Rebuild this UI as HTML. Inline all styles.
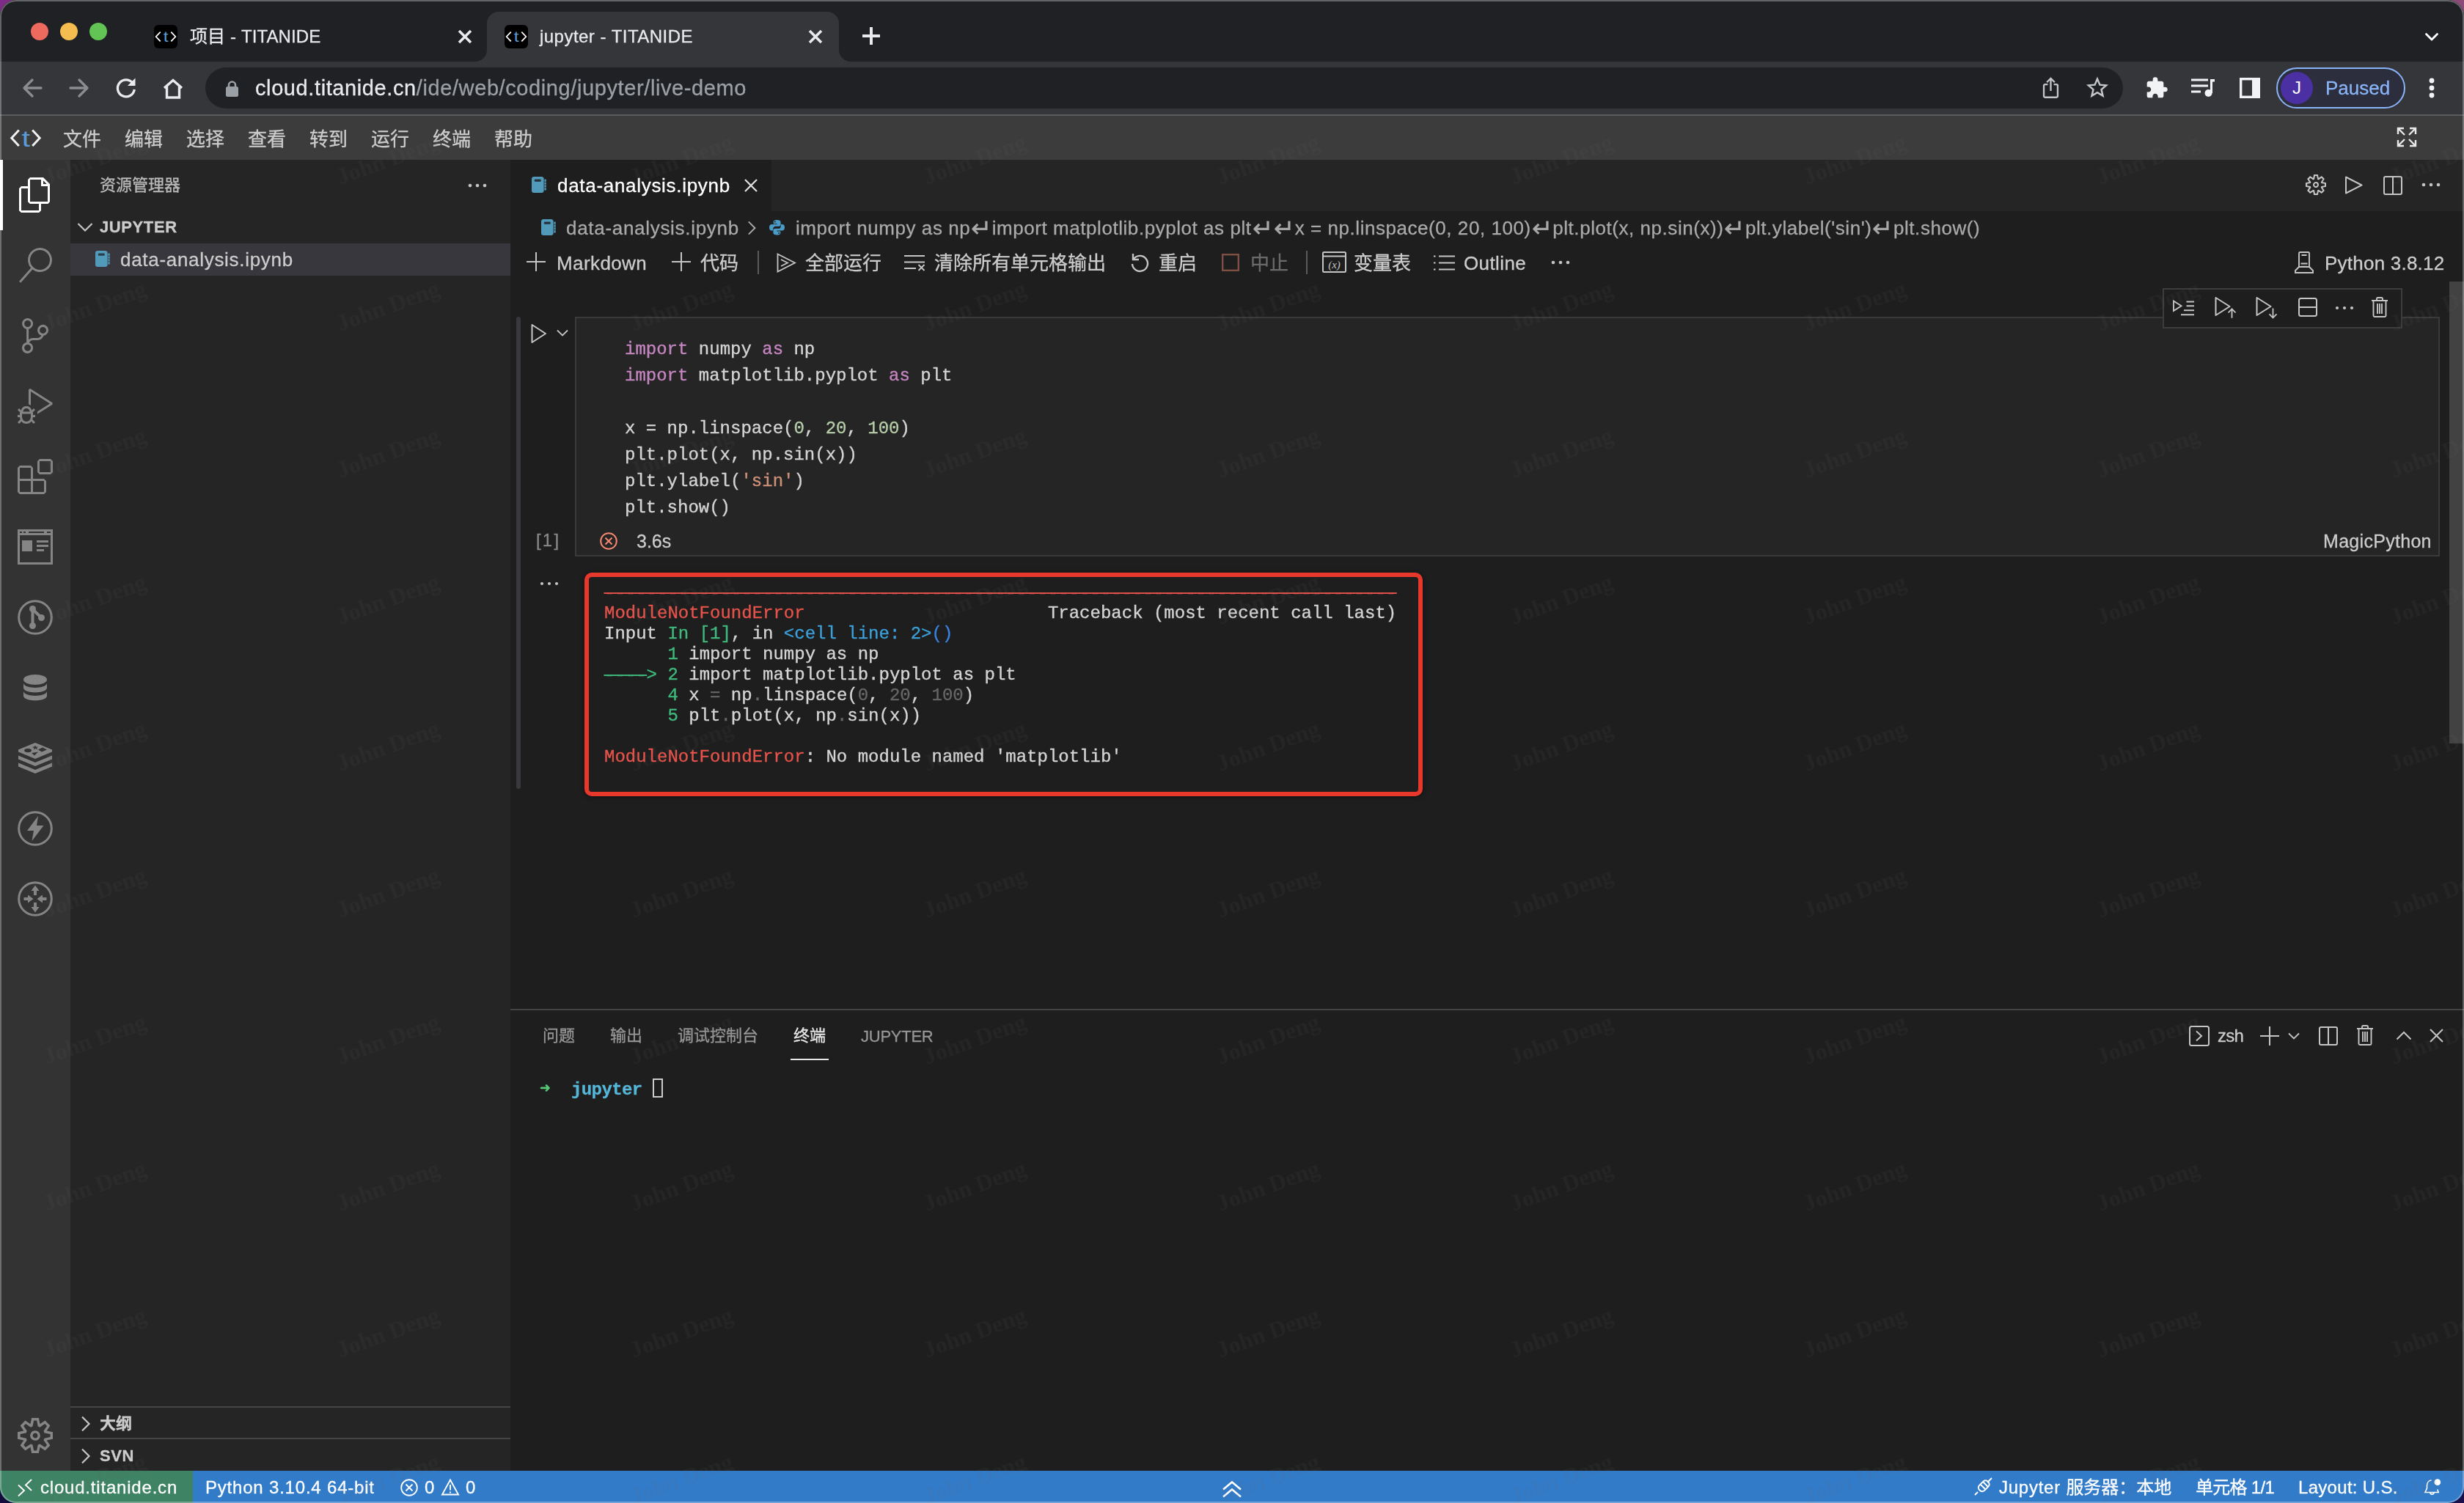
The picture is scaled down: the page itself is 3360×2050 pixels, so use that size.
<!DOCTYPE html>
<html lang="zh-CN"><head><meta charset="utf-8"><title>jupyter - TITANIDE</title>
<style>
html,body{margin:0;padding:0;background:#000}
body{width:3360px;height:2050px;overflow:hidden;position:relative;font-family:"Liberation Sans","Noto Sans CJK SC",sans-serif;color:#ccc;-webkit-font-smoothing:antialiased}
.a{position:absolute}
.t,pre,.wm{will-change:transform}
pre{-webkit-text-stroke:.35px currentColor}
.t{position:absolute;white-space:nowrap;line-height:40px;height:40px;font-size:26px;color:#ccc;-webkit-text-stroke:.3px currentColor}
svg{position:absolute;overflow:visible}
.mono{font-family:"Liberation Mono","DejaVu Sans Mono","Noto Sans Mono CJK SC",monospace}
#win{left:0;top:0;width:3360px;height:2050px;border-radius:22px;overflow:hidden;background:#1e1e1e}
#frame{left:0;top:0;width:3360px;height:2050px;border-radius:22px;box-shadow:inset 0 0 0 2px rgba(255,255,255,.3);z-index:50;pointer-events:none}
/* chrome */
#tabstrip{left:0;top:0;width:3360px;height:84px;background:#202124}
#toolbar{left:0;top:84px;width:3360px;height:72px;background:#35363a;border-bottom:2px solid #5a5b5f}
#menubar{left:0;top:158px;width:3360px;height:60px;background:#3c3c3c}
.tl{width:24px;height:24px;border-radius:50%;top:31px}
#atab{left:664px;top:16px;width:480px;height:68px;background:#35363a;border-radius:16px 16px 0 0}
#atab:before,#atab:after{content:"";position:absolute;bottom:0;width:16px;height:16px}
#atab:before{left:-16px;background:radial-gradient(circle at 0 0,rgba(53,54,58,0) 15.5px,#35363a 16.5px)}
#atab:after{right:-16px;background:radial-gradient(circle at 100% 0,rgba(53,54,58,0) 15.5px,#35363a 16.5px)}
.fav{width:32px;height:32px;border-radius:7px;background:#000;top:34px;color:#fff;font-size:18px;line-height:31px;text-align:center;letter-spacing:-1.5px;font-family:"Liberation Mono",monospace}
.fav b{font-weight:400;color:#5b9ddb}
.tabt{font-size:24px;color:#e8eaed;top:30px}
#omni{left:280px;top:92px;width:2615px;height:56px;border-radius:28px;background:#202124}
.menu{top:169.5px;font-size:26px;color:#ccc}
/* workbench */
#actbar{left:0;top:218px;width:96px;height:1788px;background:#333}
#sidebar{left:96px;top:218px;width:600px;height:1788px;background:#252526}
#editor{left:696px;top:218px;width:2664px;height:1158px;background:#1e1e1e}
#panel{left:696px;top:1376px;width:2664px;height:630px;background:#1e1e1e;border-top:2px solid #434343;box-sizing:border-box}
#status{left:0;top:2006px;width:3360px;height:44px;background:#317bc9}
#status .t{color:#fff;font-size:24px;top:3.2px}
.wm{position:absolute;width:400px;height:80px;margin:-40px 0 0 -200px;line-height:80px;text-align:center;font-family:"Liberation Serif",serif;font-size:32px;font-weight:700;color:rgba(105,105,105,.09);transform:rotate(-20deg);white-space:nowrap;pointer-events:none}
.ret{font-size:34px;line-height:0;position:relative;top:3px;margin:0 0 0 1px}
.dash{text-shadow:4.500px 0 0 currentColor,-4.500px 0 0 currentColor}
.ai{left:24px;width:48px;height:48px;fill:#858585}
.ic{stroke:#c5c5c5;fill:none;stroke-width:2}
</style></head>
<body>
<div class="a" style="left:0;top:0;width:60px;height:60px;background:#7d2b86"></div>
<div class="a" style="right:0;top:0;width:60px;height:60px;background:#8b4a78"></div>
<div class="a" style="left:0;bottom:0;width:60px;height:60px;background:#120b3c"></div>
<div class="a" style="right:0;bottom:0;width:60px;height:60px;background:#1b0f4b"></div>
<div id="win" class="a">
<!-- ===== browser chrome ===== -->
<div id="tabstrip" class="a">
  <div class="a tl" style="left:42px;background:#ee6a5f"></div>
  <div class="a tl" style="left:82px;background:#f5bd4f"></div>
  <div class="a tl" style="left:122px;background:#61c454"></div>
  <svg style="left:210px;top:34px" width="32" height="32" viewBox="0 0 32 32"><rect width="32" height="32" rx="6" fill="#000"/><path d="M8.700 9.700L2.700 16L8.700 22.300M23.300 9.700L29.300 16L23.300 22.300" stroke="#fff" stroke-width="1.800" fill="none"/><text x="0" y="0" transform="translate(16.200 23) scale(1.250 1)" font-size="19.500" fill="#5a9bd6" text-anchor="middle" font-family="Liberation Sans,sans-serif">t</text></svg>
  <div class="t tabt" style="left:259px;letter-spacing:.12px">项目 - TITANIDE</div>
  <svg style="left:622px;top:38px" width="24" height="24" viewBox="0 0 24 24"><path d="M4 4L20 20M20 4L4 20" stroke="#e8eaed" stroke-width="3.6" fill="none"/></svg>
  <div id="atab" class="a"></div>
  <svg style="left:688px;top:34px" width="32" height="32" viewBox="0 0 32 32"><rect width="32" height="32" rx="6" fill="#000"/><path d="M8.700 9.700L2.700 16L8.700 22.300M23.300 9.700L29.300 16L23.300 22.300" stroke="#fff" stroke-width="1.800" fill="none"/><text x="0" y="0" transform="translate(16.200 23) scale(1.250 1)" font-size="19.500" fill="#5a9bd6" text-anchor="middle" font-family="Liberation Sans,sans-serif">t</text></svg>
  <div class="t tabt" style="left:736px;letter-spacing:.47px">jupyter - TITANIDE</div>
  <svg style="left:1100px;top:38px" width="24" height="24" viewBox="0 0 24 24"><path d="M4 4L20 20M20 4L4 20" stroke="#e8eaed" stroke-width="3.6" fill="none"/></svg>
  <svg style="left:1174px;top:35px" width="28" height="28" viewBox="0 0 28 28"><path d="M14 2V26M2 14H26" stroke="#e8eaed" stroke-width="4" fill="none"/></svg>
  <svg style="left:3306px;top:44px" width="20" height="13.3" viewBox="0 0 24 16"><path d="M3 3L12 12L21 3" stroke="#fff" stroke-width="3.4" fill="none" stroke-linecap="round" stroke-linejoin="round"/></svg>
</div>
<div id="toolbar" class="a">
  <!-- back -->
  <svg style="left:30px;top:22px" width="28" height="28" viewBox="0 0 28 28"><path d="M26 14H3M14 3L3 14L14 25" stroke="#8b8c90" stroke-width="3.3" fill="none" stroke-linecap="round" stroke-linejoin="round"/></svg>
  <!-- forward -->
  <svg style="left:94px;top:22px" width="28" height="28" viewBox="0 0 28 28"><path d="M2 14H25M14 3L25 14L14 25" stroke="#8b8c90" stroke-width="3.3" fill="none" stroke-linecap="round" stroke-linejoin="round"/></svg>
  <!-- reload -->
  <svg style="left:157px;top:21px" width="30" height="30" viewBox="0 0 30 30"><path d="M24.5 9A11.5 11.5 0 1 0 26.3 17" stroke="#e8eaed" stroke-width="3.3" fill="none"/><path d="M27.5 1.5V12H17Z" fill="#e8eaed"/></svg>
  <!-- home -->
  <svg style="left:222px;top:22px" width="28" height="30" viewBox="0 0 28 30"><path d="M2 14L14 3.5L26 14M5.5 12V27H22.5V12" stroke="#e8eaed" stroke-width="3.4" fill="none" stroke-linejoin="miter"/></svg>
</div>
<div id="omni" class="a">
  <svg style="left:28px;top:18px" width="17" height="22" viewBox="0 0 17 22"><rect x="0" y="8" width="17" height="14" rx="2.5" fill="#9aa0a6"/><path d="M4 9V6a4.5 4.5 0 0 1 9 0V9" stroke="#9aa0a6" stroke-width="2.6" fill="none"/></svg>
  <div class="t" id="url" style="left:68px;top:8px;font-size:29px;color:#e8eaed;letter-spacing:.6px">cloud.titanide.cn<span style="color:#9aa0a6">/ide/web/coding/jupyter/live-demo</span></div>
  <!-- share -->
  <svg style="left:2505px;top:13px" width="23" height="30" viewBox="0 0 28 36"><path d="M9 12H4.5a2 2 0 0 0-2 2V31.5a2 2 0 0 0 2 2H23.5a2 2 0 0 0 2-2V14a2 2 0 0 0-2-2H19" stroke="#c4c7c9" stroke-width="2.8" fill="none"/><path d="M14 23V3M7.5 8.5L14 2L20.5 8.5" stroke="#c4c7c9" stroke-width="2.8" fill="none"/></svg>
  <!-- star -->
  <svg style="left:2566px;top:13px" width="28" height="28" viewBox="0 0 32 32"><path d="M16 3L19.9 12.2L29.8 13L22.3 19.6L24.6 29.3L16 24.1L7.4 29.3L9.7 19.6L2.2 13L12.1 12.2Z" stroke="#c4c7c9" stroke-width="2.8" fill="none" stroke-linejoin="miter"/></svg>
</div>
<!-- toolbar right -->
<svg style="left:2925px;top:104px" width="32" height="32" viewBox="0 0 24 24"><path fill="#f1f3f4" d="M20.5 11H19V7c0-1.1-.9-2-2-2h-4V3.5a2.5 2.5 0 0 0-5 0V5H4c-1.1 0-1.99.9-1.99 2v3.8H3.5c1.49 0 2.7 1.21 2.7 2.7s-1.21 2.7-2.7 2.7H2V20c0 1.1.9 2 2 2h3.8v-1.5c0-1.49 1.21-2.7 2.7-2.7s2.7 1.21 2.7 2.7V22H17c1.1 0 2-.9 2-2v-4h1.5a2.5 2.5 0 0 0 0-5z"/></svg>
<svg style="left:2987px;top:106px" width="34" height="28" viewBox="0 0 34 28"><path d="M1 3H24M1 11H24M1 19H14" stroke="#f1f3f4" stroke-width="3.2" fill="none"/><path d="M28 2H33V5.5H29.5V21H27Z" fill="#f1f3f4"/><circle cx="24.5" cy="21" r="5" fill="#f1f3f4"/><rect x="27" y="2" width="3" height="19" fill="#f1f3f4"/></svg>
<svg style="left:3054px;top:106px" width="28" height="28" viewBox="0 0 28 28"><rect x="1.7" y="1.7" width="24.6" height="24.6" stroke="#f1f3f4" stroke-width="3.4" fill="none"/><rect x="17" y="2" width="10" height="24" fill="#f1f3f4"/></svg>
<div class="a" style="left:3104px;top:92px;width:176px;height:56px;border-radius:28px;box-sizing:border-box;border:2px solid #8ab4f8;background:#2c2e3d"></div>
<div class="a" style="left:3110px;top:98px;width:44px;height:44px;border-radius:50%;background:#4a30a2;color:#fff;font-size:24px;line-height:44px;text-align:center">J</div>
<div class="t" style="left:3171px;top:100px;font-size:26px;color:#8ab4f8;letter-spacing:0">Paused</div>
<svg style="left:3312px;top:106px" width="8" height="28" viewBox="0 0 8 28"><circle cx="4" cy="4" r="3.4" fill="#f1f3f4"/><circle cx="4" cy="14" r="3.4" fill="#f1f3f4"/><circle cx="4" cy="24" r="3.4" fill="#f1f3f4"/></svg>
<!-- ===== menubar ===== -->
<div id="menubar" class="a"></div>
<svg style="left:14px;top:176px" width="42" height="25" viewBox="0 0 42 25"><path d="M11.800 1.500L1.800 12.200L11.800 23M30.200 1.500L40.200 12.200L30.200 23" stroke="#f0f0f0" stroke-width="3" fill="none"/><text x="0" y="0" transform="translate(21.300 23.600) scale(1.300 1)" font-size="32" fill="#5a9bd6" text-anchor="middle" font-family="Liberation Sans,sans-serif">t</text></svg>
<div class="t menu" style="left:86px">文件</div>
<div class="t menu" style="left:170px">编辑</div>
<div class="t menu" style="left:254px">选择</div>
<div class="t menu" style="left:338px">查看</div>
<div class="t menu" style="left:422px">转到</div>
<div class="t menu" style="left:506px">运行</div>
<div class="t menu" style="left:590px">终端</div>
<div class="t menu" style="left:674px">帮助</div>
<svg style="left:3268px;top:173px" width="28" height="28" viewBox="0 0 28 28"><path d="M2 10V2H10M2 2L11 11M18 2H26V10M26 2L17 11M2 18V26H10M2 26L11 17M26 18V26H18M26 26L17 17" stroke="#e8e8e8" stroke-width="2.4" fill="none"/></svg>
<!-- ===== activity bar ===== -->
<div id="actbar" class="a">
  <div class="a" style="left:0;top:0;width:4px;height:96px;background:#fff"></div>
  <!-- files -->
  <svg class="ai" style="top:24px;fill:#fff" viewBox="0 0 24 24"><path fill-rule="evenodd" d="M17.5 0h-9L7 1.5V6H2.5L1 7.500v15.070L2.500 24h12.070L16 22.570V18h4.700l1.300-1.430V4.500L17.500 0zm0 2.120l2.380 2.380H17.500V2.120zm-3 20.380h-12v-15H7v9.070L8.500 18h6v4.500zm6-6h-12v-15H16V6h4.500v10.500z"/></svg>
  <!-- search -->
  <svg class="ai" style="top:120px" viewBox="0 0 24 24"><path fill-rule="evenodd" d="M15.25 0a8.25 8.25 0 0 0-6.180 13.720L1 22.880l1.120 1 8.050-9.120A8.251 8.251 0 1 0 15.250.010V0zm0 15a6.750 6.750 0 1 1 0-13.500 6.750 6.750 0 0 1 0 13.500z"/></svg>
  <!-- scm -->
  <svg class="ai" style="top:216px" viewBox="0 0 24 24"><path fill-rule="evenodd" d="M21.007 8.222A3.738 3.738 0 0 0 15.045 5.200a3.737 3.737 0 0 0 1.156 6.583 2.988 2.988 0 0 1-2.668 1.670h-2.990a4.456 4.456 0 0 0-2.989 1.165V7.400a3.737 3.737 0 1 0-1.494 0v9.117a3.776 3.776 0 1 0 1.816.099 2.990 2.990 0 0 1 2.668-1.667h2.990a4.484 4.484 0 0 0 4.223-3.039 3.736 3.736 0 0 0 3.250-3.687zM4.565 3.738a2.242 2.242 0 1 1 4.484 0 2.242 2.242 0 0 1-4.484 0zm4.484 16.441a2.242 2.242 0 1 1-4.484 0 2.242 2.242 0 0 1 4.484 0zm8.221-9.715a2.242 2.242 0 1 1 0-4.485 2.242 2.242 0 0 1 0 4.485z"/></svg>
  <!-- debug -->
  <svg class="ai" style="top:312px" viewBox="0 0 24 24"><path fill-rule="evenodd" d="M10.940 13.500l-1.320 1.320a3.730 3.730 0 0 0-7.240 0L1.060 13.500 0 14.560l1.720 1.720-.220.220V18H0v1.500h1.500v.080c.077.489.214.966.410 1.420L0 22.940 1.060 24l1.650-1.650A4.308 4.308 0 0 0 6 24a4.310 4.310 0 0 0 3.290-1.650L10.940 24 12 22.940 10.090 21c.198-.464.336-.951.410-1.450v-.100H12V18h-1.500v-1.500l-.220-.220L12 14.560l-1.060-1.060zM6 13.500a2.250 2.250 0 0 1 2.250 2.250h-4.500A2.250 2.250 0 0 1 6 13.500zm3 6a3.330 3.330 0 0 1-3 3 3.330 3.330 0 0 1-3-3v-2.250h6v2.250zm14.760-9.900v1.260L13.500 17.370V15.600l8.500-5.370L9 2v9.460a5.070 5.070 0 0 0-1.500-.720V.630L8.640 0l15.120 9.600z"/></svg>
  <!-- extensions -->
  <svg class="ai" style="top:408px" viewBox="0 0 24 24"><path fill-rule="evenodd" d="M13.500 1.500L15 0h7.500L24 1.500V9l-1.500 1.500H15L13.500 9V1.500zm1.500 0V9h7.500V1.500H15zM0 15V6l1.500-1.500H9L10.500 6v7.500H18l1.500 1.500v7.500L18 24H1.500L0 22.500V15zm9-1.500V6H1.500v7.500H9zM9 15H1.500v7.500H9V15zm1.500 7.500H18V15h-7.500v7.500z"/></svg>
  <!-- preview -->
  <svg class="ai" style="top:504px" viewBox="0 0 48 48"><path fill-rule="evenodd" d="M0 0H48V48H0ZM3 8V45H45V8Z M3 3V5H6V3Z M8 3V5H11V3Z M15 3V5H36V3Z M40 3V5H45V3Z"/><rect x="6" y="15" width="14" height="15"/><rect x="26" y="15" width="16" height="3"/><rect x="26" y="21" width="16" height="3"/><rect x="26" y="27" width="10" height="3"/></svg>
  <!-- git graph -->
  <svg class="ai" style="top:600px" viewBox="0 0 48 48"><circle cx="24" cy="24" r="22.300" fill="none" stroke="#858585" stroke-width="3"/><path d="M20.500 12V36M20.500 13L32 24" stroke="#858585" stroke-width="4" fill="none"/><circle cx="20.500" cy="12.500" r="4.500"/><circle cx="20.500" cy="35.500" r="4.500"/><circle cx="32.500" cy="24.500" r="4.500"/></svg>
  <!-- database -->
  <svg class="ai" style="top:696px" viewBox="0 0 48 48"><ellipse cx="24" cy="13" rx="16" ry="7"/><path d="M8 17.500C8 26 40 26 40 17.500V24C40 32.500 8 32.500 8 24Z"/><path d="M8 28.500C8 37 40 37 40 28.500V35C40 43.500 8 43.500 8 35Z"/></svg>
  <!-- redis stack -->
  <svg class="ai" style="top:792px" viewBox="0 0 48 48"><path fill-rule="evenodd" d="M24 3L47 12.500V15.500L24 25L1 15.500V12.500ZM14 11a5 2.600 0 1 0 .1 0ZM24 6.500l1.200 2.200l3-.500l-2.200 1.800l1.500 2.200l-3.200-1.200l-2.400 1.600l.700-2.400l-2.800-1.400l3.200-.300ZM34 9.500L40 12.500L33 15.500L28 12.500ZM19 17L28 15.500L23 20.500Z"/><path d="M1 20.500L24 30L47 20.500V25.500L24 35L1 25.500Z"/><path d="M1 30.500L24 40L47 30.500V35.500L24 45L1 35.500Z"/></svg>
  <!-- lightning -->
  <svg class="ai" style="top:888px" viewBox="0 0 48 48"><circle cx="24" cy="24" r="22.300" fill="none" stroke="#858585" stroke-width="3"/><path d="M28 7L13 27H22L19.500 41L35.500 20H26Z"/></svg>
  <!-- arrows -->
  <svg class="ai" style="top:984px" viewBox="0 0 48 48"><circle cx="24" cy="24" r="22.300" fill="none" stroke="#858585" stroke-width="3"/><path d="M24 5.500L29.500 13H26V19H22V13H18.500ZM24 42.500L18.500 35H22V29H26V35H29.500ZM21.500 24L14 18.500V22H8.500V26H14V29.500ZM26.500 24L34 29.500V26H39.500V22H34V18.500Z" transform="rotate(0 24 24)"/></svg>
  <!-- gear -->
  <svg class="ai" style="top:1716px" viewBox="0 0 24 24"><path fill-rule="evenodd" d="M19.850 8.750l4.150.830v4.840l-4.150.830 2.350 3.520-3.430 3.430-3.520-2.350-.830 4.150H9.580l-.830-4.150-3.520 2.350-3.430-3.430 2.350-3.520L0 14.420V9.580l4.150-.830L1.800 5.230 5.230 1.800l3.520 2.350L9.580 0h4.840l.830 4.150 3.520-2.350 3.430 3.430-2.350 3.520zm-1.570 5.070l4-.810v-2l-4-.810-.540-1.300 2.290-3.430-1.430-1.430-3.430 2.290-1.300-.540-.810-4h-2l-.810 4-1.300.540-3.430-2.290-1.430 1.430L6.380 8.900l-.540 1.300-4 .810v2l4 .810.540 1.300-2.290 3.430 1.430 1.430 3.430-2.290 1.300.540.810 4h2l.810-4 1.300-.540 3.430 2.290 1.430-1.430-2.290-3.430.540-1.300zm-8.186-4.672A3.430 3.430 0 0 1 12 8.570 3.440 3.440 0 0 1 15.430 12a3.430 3.430 0 1 1-5.336-2.852zm.956 4.274c.281.188.612.288.950.288A1.700 1.700 0 0 0 13.710 12a1.710 1.710 0 1 0-2.660 1.422z"/></svg>
</div>
<!-- ===== sidebar ===== -->
<div id="sidebar" class="a"></div>
<div class="t" style="left:136px;top:233px;font-size:22px;color:#bbb">资源管理器</div>
<svg style="left:638px;top:250px" width="26" height="6" viewBox="0 0 26 6"><circle cx="3" cy="3" r="2.300" fill="#c5c5c5"/><circle cx="13" cy="3" r="2.300" fill="#c5c5c5"/><circle cx="23" cy="3" r="2.300" fill="#c5c5c5"/></svg>
<svg style="left:105px;top:303px" width="22" height="14" viewBox="0 0 22 14"><path d="M1.500 2L11 11.500L20.500 2" stroke="#c5c5c5" stroke-width="2.200" fill="none"/></svg>
<div class="t" style="left:136px;top:290px;font-size:22px;font-weight:700;color:#ccc;letter-spacing:.6px">JUPYTER</div>
<div class="a" style="left:96px;top:332px;width:600px;height:44px;background:#37373d"></div>
<svg style="left:130px;top:342px" width="20" height="22" viewBox="0 0 20 22"><rect x="0" y="0" width="16.600" height="22" rx="3.200" fill="#519aba"/><rect x="3.800" y="3.600" width="9" height="3.200" rx="1.200" fill="#2c3e4c"/><rect x="17.400" y="3.500" width="2.300" height="15" fill="#519aba"/><path d="M17.400 7.300H19.700M17.400 11H19.700M17.400 14.700H19.700" stroke="#2c3e4c" stroke-width="1.100"/></svg>
<div class="t" id="sfile" style="left:164px;top:334px;font-size:26px;color:#ccc;letter-spacing:.7px">data-analysis.ipynb</div>
<div class="a" style="left:96px;top:1918px;width:600px;height:2px;background:#454545"></div>
<div class="a" style="left:96px;top:1961px;width:600px;height:2px;background:#454545"></div>
<svg style="left:110px;top:1931px" width="14" height="22" viewBox="0 0 14 22"><path d="M2 1.500L11.500 11L2 20.500" stroke="#c5c5c5" stroke-width="2.200" fill="none"/></svg>
<div class="t" style="left:136px;top:1922px;font-size:22px;font-weight:700;color:#ccc">大纲</div>
<svg style="left:110px;top:1975px" width="14" height="22" viewBox="0 0 14 22"><path d="M2 1.500L11.500 11L2 20.500" stroke="#c5c5c5" stroke-width="2.200" fill="none"/></svg>
<div class="t" style="left:136px;top:1966px;font-size:22px;font-weight:700;color:#ccc;letter-spacing:.6px">SVN</div>
<!-- ===== editor ===== -->
<div id="editor" class="a"></div>
<div class="a" style="left:696px;top:218px;width:2664px;height:70px;background:#252526"></div>
<div class="a" style="left:696px;top:218px;width:356px;height:70px;background:#1e1e1e"></div>
<svg style="left:725px;top:241px" width="20" height="22" viewBox="0 0 20 22"><rect x="0" y="0" width="16.600" height="22" rx="3.200" fill="#519aba"/><rect x="3.800" y="3.600" width="9" height="3.200" rx="1.200" fill="#24323d"/><rect x="17.400" y="3.500" width="2.300" height="15" fill="#519aba"/><path d="M17.400 7.300H19.700M17.400 11H19.700M17.400 14.700H19.700" stroke="#24323d" stroke-width="1.100"/></svg>
<div class="t" id="tabfile" style="left:760px;top:233px;font-size:26px;color:#fff;letter-spacing:.7px">data-analysis.ipynb</div>
<svg style="left:1014px;top:243px" width="20" height="20" viewBox="0 0 20 20"><path d="M2 2L18 18M18 2L2 18" stroke="#e0e0e0" stroke-width="2.200" fill="none"/></svg>
<!-- editor actions -->
<svg style="left:3144px;top:238px" width="28" height="28" viewBox="0 0 24 24" fill="#c5c5c5"><path fill-rule="evenodd" d="M19.850 8.750l4.150.830v4.840l-4.150.830 2.350 3.520-3.430 3.430-3.520-2.350-.830 4.150H9.580l-.830-4.150-3.520 2.350-3.430-3.430 2.350-3.520L0 14.420V9.580l4.150-.830L1.800 5.230 5.230 1.800l3.520 2.350L9.580 0h4.840l.830 4.150 3.520-2.350 3.430 3.430-2.350 3.520zm-1.570 5.070l4-.810v-2l-4-.810-.540-1.300 2.290-3.430-1.430-1.430-3.430 2.290-1.300-.540-.810-4h-2l-.810 4-1.300.540-3.430-2.290-1.430 1.430L6.380 8.900l-.540 1.300-4 .810v2l4 .810.540 1.300-2.290 3.430 1.430 1.430 3.430-2.290 1.300.540.810 4h2l.810-4 1.300-.540 3.430 2.290 1.430-1.430-2.290-3.430.540-1.300zm-8.186-4.672A3.430 3.430 0 0 1 12 8.570 3.440 3.440 0 0 1 15.430 12a3.430 3.430 0 1 1-5.336-2.852zm.956 4.274c.281.188.612.288.950.288A1.700 1.700 0 0 0 13.710 12a1.710 1.710 0 1 0-2.660 1.422z"/></svg>
<svg style="left:3197px;top:239px" width="26" height="27" viewBox="0 0 26 27"><path class="ic" d="M2 2.500L23.500 13.500L2 24.500Z" stroke-linejoin="round"/></svg>
<svg style="left:3250px;top:240px" width="26" height="26" viewBox="0 0 26 26"><rect class="ic" x="1" y="1" width="24" height="24" rx="2"/><path class="ic" d="M13 1V25"/></svg>
<svg style="left:3302px;top:249px" width="26" height="6" viewBox="0 0 26 6"><circle cx="3" cy="3" r="2.300" fill="#c5c5c5"/><circle cx="13" cy="3" r="2.300" fill="#c5c5c5"/><circle cx="23" cy="3" r="2.300" fill="#c5c5c5"/></svg>
<!-- breadcrumbs -->
<svg style="left:738px;top:298.5px" width="20" height="22" viewBox="0 0 20 22"><rect x="0" y="0" width="16.600" height="22" rx="3.200" fill="#519aba"/><rect x="3.800" y="3.600" width="9" height="3.200" rx="1.200" fill="#24323d"/><rect x="17.400" y="3.500" width="2.300" height="15" fill="#519aba"/><path d="M17.400 7.300H19.700M17.400 11H19.700M17.400 14.700H19.700" stroke="#24323d" stroke-width="1.100"/></svg>
<div class="t" id="bcfile" style="left:772px;top:291px;font-size:26px;color:#a9a9a9;letter-spacing:.7px">data-analysis.ipynb</div>
<svg style="left:1019px;top:301px" width="12.700" height="20" viewBox="0 0 14 22"><path d="M2 1.500L11.500 11L2 20.500" stroke="#a9a9a9" stroke-width="2.200" fill="none"/></svg>
<svg style="left:1049px;top:299.500px" width="21" height="20.500" viewBox="0 0 22 22" preserveAspectRatio="none"><path d="M10.800 0C7 0 6 1.200 6 3v2.500h5.200v1H3.500C1.500 6.500 0 8 0 11s1.300 4.500 3.200 4.500H5.500v-2.800c0-2 1.500-3.400 3.400-3.400h4.800c1.500 0 2.600-1.200 2.600-2.700V3c0-1.700-1.600-3-5.500-3zM8.200 1.700a1 1 0 1 1 0 2 1 1 0 0 1 0-2z" fill="#4a9cc7"/><path d="M11.200 22c3.800 0 4.800-1.200 4.800-3v-2.500h-5.200v-1h7.700c2 0 3.500-1.500 3.500-4.500s-1.300-4.500-3.200-4.500h-2.300v2.800c0 2-1.500 3.400-3.400 3.400H8.300c-1.500 0-2.600 1.200-2.600 2.700V19c0 1.700 1.600 3 5.500 3zm2.600-1.700a1 1 0 1 1 0-2 1 1 0 0 1 0 2z" fill="#4a9cc7"/></svg>
<div class="t" id="bctext" style="left:1085px;top:291px;font-size:26px;color:#a9a9a9;letter-spacing:.55px">import numpy as np<span class="ret">↵</span>import matplotlib.pyplot as plt<span class="ret">↵</span><span class="ret">↵</span>x = np.linspace(0, 20, 100)<span class="ret">↵</span>plt.plot(x, np.sin(x))<span class="ret">↵</span>plt.ylabel('sin')<span class="ret">↵</span>plt.show()</div>
<!-- notebook toolbar -->
<svg style="left:718px;top:344px" width="26" height="26" viewBox="0 0 26 26"><path class="ic" d="M13 0V26M0 13H26"/></svg>
<div class="t" id="tb1" style="left:759px;top:339px;letter-spacing:.4px">Markdown</div>
<svg style="left:916px;top:344px" width="26" height="26" viewBox="0 0 26 26"><path class="ic" d="M13 0V26M0 13H26"/></svg>
<div class="t" style="left:955px;top:339px">代码</div>
<div class="a" style="left:1033px;top:342px;width:2px;height:32px;background:#5a5a5a"></div>
<svg style="left:1059px;top:345px" width="27" height="27" viewBox="0 0 27 27"><path class="ic" d="M1.500 1.500L25 13.500L1.500 25.500Z M6 9L15 13.500L6 18" stroke-linejoin="miter" style="stroke-width:1.800"/></svg>
<div class="t" style="left:1098px;top:339px">全部运行</div>
<svg style="left:1233px;top:347px" width="29" height="22" viewBox="0 0 29 22"><path class="ic" d="M0 2H28M0 10.500H28M0 19H16M19.500 14L27.500 22M27.500 14L19.500 22" style="stroke-width:1.900"/></svg>
<div class="t" style="left:1274px;top:339px">清除所有单元格输出</div>
<svg style="left:1541px;top:345px" width="26" height="26" viewBox="0 0 26 26"><path class="ic" d="M4.800 8.500A10.500 10.500 0 1 1 3 15" style="stroke-width:2.400"/><path class="ic" d="M4 1V9H12" style="stroke-width:2.400"/></svg>
<div class="t" style="left:1580px;top:339px">重启</div>
<svg style="left:1666px;top:346px" width="24" height="24" viewBox="0 0 24 24"><rect x="1.200" y="1.200" width="21.600" height="21.600" fill="none" stroke="#7e4f43" stroke-width="2.400"/></svg>
<div class="t" style="left:1705px;top:339px;color:#6b6b6b">中止</div>
<div class="a" style="left:1781px;top:342px;width:2px;height:32px;background:#5a5a5a"></div>
<svg style="left:1803px;top:343px" width="33" height="29" viewBox="0 0 33 29"><rect class="ic" x="1" y="1" width="31" height="27" rx="1.500"/><path class="ic" d="M1 6.500H32"/><text x="16.500" y="23" font-size="15" font-style="italic" font-family="Liberation Serif,serif" fill="#c5c5c5" text-anchor="middle">(x)</text></svg>
<div class="t" style="left:1846px;top:339px">变量表</div>
<svg style="left:1955px;top:348px" width="29" height="22" viewBox="0 0 29 22"><path class="ic" d="M7 1.500H29M7 10.500H29M7 19.500H29M0 1.500H2.500M0 10.500H2.500M0 19.500H2.500" style="stroke-width:2.200"/></svg>
<div class="t" id="tb2" style="left:1996px;top:339px;letter-spacing:.4px">Outline</div>
<svg style="left:2115px;top:355px" width="26" height="6" viewBox="0 0 26 6"><circle cx="3" cy="3" r="2.300" fill="#c5c5c5"/><circle cx="13" cy="3" r="2.300" fill="#c5c5c5"/><circle cx="23" cy="3" r="2.300" fill="#c5c5c5"/></svg>
<!-- kernel -->
<svg style="left:3128px;top:343px" width="28" height="30" viewBox="0 0 28 30"><path class="ic" d="M7 21V2.500A1.500 1.500 0 0 1 8.500 1H19.500A1.500 1.500 0 0 1 21 2.500V21M7 21H21M7 21L2 26V29H26V26L21 21M10.500 5H17.500M9.500 16.500H18.500M9.500 20.800H18.500" style="stroke-width:1.900"/></svg>
<div class="t" id="kern" style="left:3170px;top:339px;letter-spacing:.23px">Python 3.8.12</div>
<!-- scrollbar -->
<div class="a" style="left:3340px;top:384px;width:20px;height:630px;background:#424242"></div>
<!-- focus bar -->
<div class="a" style="left:704px;top:432px;width:6px;height:644px;background:#38383d;border-radius:3px"></div>
<!-- cell -->
<div class="a" style="left:784px;top:432px;width:2543px;height:327px;box-sizing:border-box;border:2px solid #3a3a3d;background:#252526"></div>
<svg style="left:724px;top:441px" width="22" height="28" viewBox="0 0 22 28"><path class="ic" d="M1.500 2L20 14L1.500 26Z" stroke-linejoin="round"/></svg>
<svg style="left:759px;top:449px" width="16" height="10" viewBox="0 0 16 10"><path class="ic" d="M1 1.500L8 8.500L15 1.500" style="stroke-width:1.800"/></svg>
<pre class="a mono" id="code" style="left:852px;top:459px;margin:0;font-size:24px;line-height:36px;color:#d4d4d4"><span style="color:#c586c0">import</span> numpy <span style="color:#c586c0">as</span> np
<span style="color:#c586c0">import</span> matplotlib.pyplot <span style="color:#c586c0">as</span> plt

x = np.linspace(<span style="color:#b5cea8">0</span>, <span style="color:#b5cea8">20</span>, <span style="color:#b5cea8">100</span>)
plt.plot(x, np.sin(x))
plt.ylabel(<span style="color:#ce9178">'sin'</span>)
plt.show()</pre>
<div class="t" style="left:731px;top:717px;font-size:24px;color:#8a8a8a;letter-spacing:2.2px">[1]</div>
<svg style="left:818px;top:726px" width="24" height="24" viewBox="0 0 24 24"><circle cx="12" cy="12" r="10.800" fill="none" stroke="#f48771" stroke-width="2"/><path d="M7.500 7.500L16.500 16.500M16.500 7.500L7.500 16.500" stroke="#f48771" stroke-width="2" fill="none"/></svg>
<div class="t" style="left:868px;top:718px;font-size:25px">3.6s</div>
<div class="t" id="magic" style="left:3168px;top:718px;font-size:25px;letter-spacing:.3px">MagicPython</div>
<!-- cell toolbar -->
<div class="a" style="left:2949px;top:393px;width:327px;height:55px;box-sizing:border-box;border:2px solid #3c3c3c;background:#1e1e1e"></div>
<svg style="left:2963px;top:409px" width="30" height="22" viewBox="0 0 30 22"><path class="ic" d="M18.500 2.500H29M18.500 8.300H29M15 14.300H29M11 20.300H29M1 1.500L11.500 8.300L1 15Z" style="stroke-width:1.900"/></svg>
<svg style="left:3020px;top:403px" width="32" height="32" viewBox="0 0 32 32"><path class="ic" d="M1.500 3L20.500 15L1.500 27Z" stroke-linejoin="round"/><path class="ic" d="M23.500 30.700V18.500M18.500 23.500L23.500 18.300L28.500 23.500" style="stroke-width:1.800"/></svg>
<svg style="left:3076px;top:403px" width="32" height="32" viewBox="0 0 32 32"><path class="ic" d="M1.500 3L20.500 15L1.500 27Z" stroke-linejoin="round"/><path class="ic" d="M23.500 17.500V30.200M18.500 25.300L23.500 30.500L28.500 25.300" style="stroke-width:1.800"/></svg>
<svg style="left:3134px;top:406px" width="26" height="26" viewBox="0 0 26 26"><rect class="ic" x="1" y="1" width="24" height="24" rx="2.500"/><path class="ic" d="M1 13H25"/></svg>
<svg style="left:3184px;top:417px" width="26" height="6" viewBox="0 0 26 6"><circle cx="3" cy="3" r="2.100" fill="#c5c5c5"/><circle cx="13" cy="3" r="2.100" fill="#c5c5c5"/><circle cx="23" cy="3" r="2.100" fill="#c5c5c5"/></svg>
<svg style="left:3234px;top:405px" width="22" height="28" viewBox="0 0 22 28"><path class="ic" d="M0 5H22M7 5V2.500A1.500 1.500 0 0 1 8.500 1H13.500A1.500 1.500 0 0 1 15 2.500V5M2.500 5V25.500A1.500 1.500 0 0 0 4 27H18A1.500 1.500 0 0 0 19.500 25.500V5M8 9V23M11 9V23M14 9V23" style="stroke-width:1.900"/></svg>
<!-- output -->
<svg style="left:736px;top:793px" width="26" height="6" viewBox="0 0 26 6"><circle cx="3" cy="3" r="2.100" fill="#c5c5c5"/><circle cx="13" cy="3" r="2.100" fill="#c5c5c5"/><circle cx="23" cy="3" r="2.100" fill="#c5c5c5"/></svg>
<div class="a" style="left:797px;top:781px;width:1143px;height:305px;box-sizing:border-box;border:6px solid #e7382b;border-radius:10px;box-shadow:0 1px 6px rgba(0,0,0,.5)"></div>
<pre class="a mono" id="out" style="left:824px;top:795px;margin:0;font-size:24px;line-height:28px;color:#d4d4d4"><span class="dash" style="color:#e5534b">---------------------------------------------------------------------------</span>
<span style="color:#e5534b">ModuleNotFoundError</span>                       Traceback (most recent call last)
Input <span style="color:#3fb97c">In [1]</span>, in <span style="color:#3b9fd8">&lt;cell line: 2&gt;</span><span style="color:#3b82e0">()</span>
<span style="color:#3fb97c">      1</span> import numpy as np
<span style="color:#3fb97c"><span class="dash">----</span>&gt; 2</span> import matplotlib.pyplot as plt
<span style="color:#3fb97c">      4</span> x <span style="color:#666">=</span> np<span style="color:#666">.</span>linspace(<span style="color:#666">0</span>, <span style="color:#666">20</span>, <span style="color:#666">100</span>)
<span style="color:#3fb97c">      5</span> plt<span style="color:#666">.</span>plot(x, np<span style="color:#666">.</span>sin(x))

<span style="color:#e5534b">ModuleNotFoundError</span>: No module named 'matplotlib'</pre>
<!-- ===== panel ===== -->
<div id="panel" class="a"></div>
<div class="t pt" style="left:740px;top:1393px;font-size:22px;color:#969696">问题</div>
<div class="t pt" style="left:832px;top:1393px;font-size:22px;color:#969696">输出</div>
<div class="t pt" style="left:924px;top:1393px;font-size:22px;color:#969696">调试控制台</div>
<div class="t pt" style="left:1082px;top:1393px;font-size:22px;color:#e7e7e7">终端</div>
<div class="a" style="left:1078px;top:1444px;width:52px;height:2px;background:#e7e7e7"></div>
<div class="t pt" id="pj" style="left:1174px;top:1394px;font-size:22px;color:#969696;letter-spacing:-.25px">JUPYTER</div>
<!-- terminal -->
<div class="t mono" style="left:736px;top:1465.5px;font-size:24px;font-weight:700;color:#58c878">➜</div>
<div class="t mono" id="term" style="left:779px;top:1466.5px;font-size:24px;font-weight:700;color:#56b6d8;letter-spacing:-.6px">jupyter</div>
<div class="a" style="left:890px;top:1471px;width:14px;height:26px;box-sizing:border-box;border:2px solid #ccc"></div>
<!-- panel actions -->
<svg style="left:2985px;top:1399px" width="28" height="28" viewBox="0 0 28 28"><rect class="ic" x="1" y="1" width="26" height="26" rx="2.500"/><path class="ic" d="M10 7.500L17 14L10 20.500"/></svg>
<div class="t" id="zsh" style="left:3024px;top:1393px;font-size:24px;color:#ccc;letter-spacing:-.7px">zsh</div>
<svg style="left:3082px;top:1400px" width="26" height="26" viewBox="0 0 26 26"><path class="ic" d="M13 0V26M0 13H26"/></svg>
<svg style="left:3120px;top:1408px" width="16" height="10" viewBox="0 0 16 10"><path class="ic" d="M1 1.500L8 8.500L15 1.500" style="stroke-width:1.800"/></svg>
<svg style="left:3162px;top:1400px" width="26" height="26" viewBox="0 0 26 26"><rect class="ic" x="1" y="1" width="24" height="24" rx="2"/><path class="ic" d="M13 1V25"/></svg>
<svg style="left:3214px;top:1398px" width="22" height="28" viewBox="0 0 22 28"><path class="ic" d="M0 5H22M7 5V2.500A1.500 1.500 0 0 1 8.500 1H13.500A1.500 1.500 0 0 1 15 2.500V5M2.500 5V25.500A1.500 1.500 0 0 0 4 27H18A1.500 1.500 0 0 0 19.500 25.500V5M8 9V23M11 9V23M14 9V23" style="stroke-width:1.900"/></svg>
<svg style="left:3267px;top:1406px" width="22" height="13" viewBox="0 0 22 13"><path class="ic" d="M1.500 11.500L11 2L20.500 11.500"/></svg>
<svg style="left:3313px;top:1403px" width="19" height="19" viewBox="0 0 19 19"><path class="ic" d="M1 1L18 18M18 1L1 18"/></svg>
<!-- ===== status bar ===== -->
<div id="status" class="a">
  <div class="a" style="left:0;top:0;width:263px;height:44px;background:#3e8363"></div>
  <svg style="left:24px;top:11px" width="20" height="24" viewBox="0 0 20 24"><path d="M1 8.500L9 16L1 23.500M19 1L11 8.500L19 16" stroke="#fff" stroke-width="1.900" fill="none"/></svg>
  <div class="t" id="s1" style="left:55px;letter-spacing:.8px">cloud.titanide.cn</div>
  <div class="t" id="s2" style="left:280px;letter-spacing:.8px">Python 3.10.4 64-bit</div>
  <svg style="left:546px;top:11px" width="24" height="24" viewBox="0 0 24 24"><circle cx="12" cy="12" r="10.800" fill="none" stroke="#fff" stroke-width="1.900"/><path d="M7.500 7.500L16.500 16.500M16.500 7.500L7.500 16.500" stroke="#fff" stroke-width="1.900" fill="none"/></svg>
  <div class="t" style="left:579px">0</div>
  <svg style="left:602px;top:11px" width="24" height="23" viewBox="0 0 24 23"><path d="M12 1.500L23 21.500H1Z" stroke="#fff" stroke-width="1.900" fill="none" stroke-linejoin="miter"/><path d="M12 8V15.500M12 17.500V19.500" stroke="#fff" stroke-width="2" fill="none"/></svg>
  <div class="t" style="left:635px">0</div>
  <svg style="left:1667px;top:14px" width="26" height="22" viewBox="0 0 26 22"><path d="M1 11.500L13 1.500L25 11.500M1 21.500L13 11.500L25 21.500" stroke="#fff" stroke-width="2.600" fill="none"/></svg>
  <svg style="left:2692px;top:9px" width="25" height="25" viewBox="0 0 25 25"><path d="M1 24L5 20M18 7L24 1M8.500 9.500L15.500 16.500M12 6L19 13M10 8l2.500-2.500a5 5 0 0 1 7 7L17 15M10 8L7 11a5 5 0 0 0 7 7l3-3" stroke="#fff" stroke-width="1.900" fill="none"/></svg>
  <div class="t" id="s3" style="left:2726px"><span style="letter-spacing:.75px">Jupyter </span>服务器：本地</div>
  <div class="t" id="s4" style="left:2994px;letter-spacing:-.7px">单元格 1/1</div>
  <div class="t" id="s5" style="left:3134px;letter-spacing:.3px">Layout: U.S.</div>
  <svg style="left:3305.500px;top:10px" width="23.500" height="26" viewBox="0 0 27 30"><path d="M11 3.200A8.500 8.500 0 0 0 4 11.500V16L1 22.500H22L20.500 18M9 22.500A3 3 0 0 0 15 22.500" stroke="#fff" stroke-width="1.900" fill="none"/><circle cx="20.500" cy="6.500" r="5" fill="#fff"/></svg>
</div>
<!-- ===== watermark ===== -->
<div class="a" style="left:0;top:158px;width:3360px;height:1892px;overflow:hidden;z-index:40;pointer-events:none">
<div class="wm" style="left:128.5px;top:59px">John Deng</div>
<div class="wm" style="left:528.5px;top:59px">John Deng</div>
<div class="wm" style="left:928.5px;top:59px">John Deng</div>
<div class="wm" style="left:1328.5px;top:59px">John Deng</div>
<div class="wm" style="left:1728.5px;top:59px">John Deng</div>
<div class="wm" style="left:2128.5px;top:59px">John Deng</div>
<div class="wm" style="left:2528.5px;top:59px">John Deng</div>
<div class="wm" style="left:2928.5px;top:59px">John Deng</div>
<div class="wm" style="left:3328.5px;top:59px">John Deng</div>
<div class="wm" style="left:128.5px;top:259px">John Deng</div>
<div class="wm" style="left:528.5px;top:259px">John Deng</div>
<div class="wm" style="left:928.5px;top:259px">John Deng</div>
<div class="wm" style="left:1328.5px;top:259px">John Deng</div>
<div class="wm" style="left:1728.5px;top:259px">John Deng</div>
<div class="wm" style="left:2128.5px;top:259px">John Deng</div>
<div class="wm" style="left:2528.5px;top:259px">John Deng</div>
<div class="wm" style="left:2928.5px;top:259px">John Deng</div>
<div class="wm" style="left:3328.5px;top:259px">John Deng</div>
<div class="wm" style="left:128.5px;top:459px">John Deng</div>
<div class="wm" style="left:528.5px;top:459px">John Deng</div>
<div class="wm" style="left:928.5px;top:459px">John Deng</div>
<div class="wm" style="left:1328.5px;top:459px">John Deng</div>
<div class="wm" style="left:1728.5px;top:459px">John Deng</div>
<div class="wm" style="left:2128.5px;top:459px">John Deng</div>
<div class="wm" style="left:2528.5px;top:459px">John Deng</div>
<div class="wm" style="left:2928.5px;top:459px">John Deng</div>
<div class="wm" style="left:3328.5px;top:459px">John Deng</div>
<div class="wm" style="left:128.5px;top:659px">John Deng</div>
<div class="wm" style="left:528.5px;top:659px">John Deng</div>
<div class="wm" style="left:928.5px;top:659px">John Deng</div>
<div class="wm" style="left:1328.5px;top:659px">John Deng</div>
<div class="wm" style="left:1728.5px;top:659px">John Deng</div>
<div class="wm" style="left:2128.5px;top:659px">John Deng</div>
<div class="wm" style="left:2528.5px;top:659px">John Deng</div>
<div class="wm" style="left:2928.5px;top:659px">John Deng</div>
<div class="wm" style="left:3328.5px;top:659px">John Deng</div>
<div class="wm" style="left:128.5px;top:859px">John Deng</div>
<div class="wm" style="left:528.5px;top:859px">John Deng</div>
<div class="wm" style="left:928.5px;top:859px">John Deng</div>
<div class="wm" style="left:1328.5px;top:859px">John Deng</div>
<div class="wm" style="left:1728.5px;top:859px">John Deng</div>
<div class="wm" style="left:2128.5px;top:859px">John Deng</div>
<div class="wm" style="left:2528.5px;top:859px">John Deng</div>
<div class="wm" style="left:2928.5px;top:859px">John Deng</div>
<div class="wm" style="left:3328.5px;top:859px">John Deng</div>
<div class="wm" style="left:128.5px;top:1059px">John Deng</div>
<div class="wm" style="left:528.5px;top:1059px">John Deng</div>
<div class="wm" style="left:928.5px;top:1059px">John Deng</div>
<div class="wm" style="left:1328.5px;top:1059px">John Deng</div>
<div class="wm" style="left:1728.5px;top:1059px">John Deng</div>
<div class="wm" style="left:2128.5px;top:1059px">John Deng</div>
<div class="wm" style="left:2528.5px;top:1059px">John Deng</div>
<div class="wm" style="left:2928.5px;top:1059px">John Deng</div>
<div class="wm" style="left:3328.5px;top:1059px">John Deng</div>
<div class="wm" style="left:128.5px;top:1259px">John Deng</div>
<div class="wm" style="left:528.5px;top:1259px">John Deng</div>
<div class="wm" style="left:928.5px;top:1259px">John Deng</div>
<div class="wm" style="left:1328.5px;top:1259px">John Deng</div>
<div class="wm" style="left:1728.5px;top:1259px">John Deng</div>
<div class="wm" style="left:2128.5px;top:1259px">John Deng</div>
<div class="wm" style="left:2528.5px;top:1259px">John Deng</div>
<div class="wm" style="left:2928.5px;top:1259px">John Deng</div>
<div class="wm" style="left:3328.5px;top:1259px">John Deng</div>
<div class="wm" style="left:128.5px;top:1459px">John Deng</div>
<div class="wm" style="left:528.5px;top:1459px">John Deng</div>
<div class="wm" style="left:928.5px;top:1459px">John Deng</div>
<div class="wm" style="left:1328.5px;top:1459px">John Deng</div>
<div class="wm" style="left:1728.5px;top:1459px">John Deng</div>
<div class="wm" style="left:2128.5px;top:1459px">John Deng</div>
<div class="wm" style="left:2528.5px;top:1459px">John Deng</div>
<div class="wm" style="left:2928.5px;top:1459px">John Deng</div>
<div class="wm" style="left:3328.5px;top:1459px">John Deng</div>
<div class="wm" style="left:128.5px;top:1659px">John Deng</div>
<div class="wm" style="left:528.5px;top:1659px">John Deng</div>
<div class="wm" style="left:928.5px;top:1659px">John Deng</div>
<div class="wm" style="left:1328.5px;top:1659px">John Deng</div>
<div class="wm" style="left:1728.5px;top:1659px">John Deng</div>
<div class="wm" style="left:2128.5px;top:1659px">John Deng</div>
<div class="wm" style="left:2528.5px;top:1659px">John Deng</div>
<div class="wm" style="left:2928.5px;top:1659px">John Deng</div>
<div class="wm" style="left:3328.5px;top:1659px">John Deng</div>
<div class="wm" style="left:128.5px;top:1859px">John Deng</div>
<div class="wm" style="left:528.5px;top:1859px">John Deng</div>
<div class="wm" style="left:928.5px;top:1859px">John Deng</div>
<div class="wm" style="left:1328.5px;top:1859px">John Deng</div>
<div class="wm" style="left:1728.5px;top:1859px">John Deng</div>
<div class="wm" style="left:2128.5px;top:1859px">John Deng</div>
<div class="wm" style="left:2528.5px;top:1859px">John Deng</div>
<div class="wm" style="left:2928.5px;top:1859px">John Deng</div>
<div class="wm" style="left:3328.5px;top:1859px">John Deng</div>
</div>
</div>
<div id="frame" class="a"></div>
</body></html>
